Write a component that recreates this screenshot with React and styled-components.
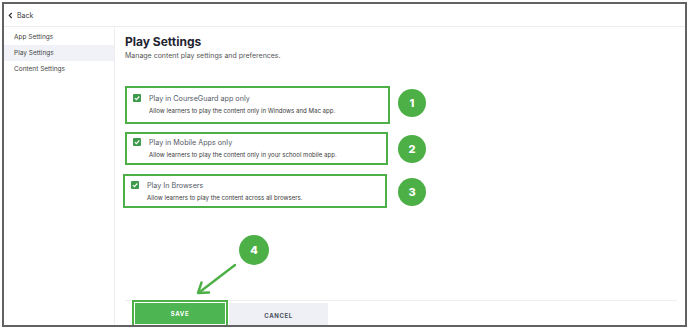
import React from "react";
import styled, { createGlobalStyle } from "styled-components";

const GREEN = "#4cb046";

const GlobalStyle = createGlobalStyle`
  html, body {
    margin: 0;
    padding: 0;
    background: #ffffff;
    font-family: Inter, "Noto Sans", "Liberation Sans", sans-serif;
  }
`;

const options = [
  {
    title: "Play in CourseGuard app only",
    desc: "Allow learners to play the content only in Windows and Mac app.",
    pad: "5px 0 6px",
    shift: 0,
    width: 265,
    gap: 0,
  },
  {
    title: "Play in Mobile Apps only",
    desc: "Allow learners to play the content only in your school mobile app.",
    pad: "3px 0 3px",
    shift: 0,
    width: 263,
    gap: 8,
  },
  {
    title: "Play In Browsers",
    desc: "Allow learners to play the content across all browsers.",
    pad: "4px 0 3px",
    shift: -2,
    width: 264,
    gap: 9,
  },
];

const markers = [
  { n: 1, x: 394, y: 85, size: 28 },
  { n: 2, x: 394, y: 131, size: 28 },
  { n: 3, x: 394, y: 174, size: 28 },
  { n: 4, x: 235, y: 231, size: 30 },
];

export default function App() {
  return (
    <>
      <GlobalStyle />
      <Frame>
        <Header>
          <BackLink>
            <Chevron viewBox="0 0 6 8">
              <path d="M4.5 1 L1.5 4 L4.5 7" />
            </Chevron>
            Back
          </BackLink>
        </Header>
        <Body>
          <Sidebar>
            <NavItem>App Settings</NavItem>
            <NavItem $active>Play Settings</NavItem>
            <NavItem>Content Settings</NavItem>
          </Sidebar>
          <Main>
            <Title>Play Settings</Title>
            <Subtitle>Manage content play settings and preferences.</Subtitle>
            <Options>
              {options.map((o) => (
                <Card
                  key={o.title}
                  $pad={o.pad}
                  $shift={o.shift}
                  $width={o.width}
                  $gap={o.gap}
                >
                  <CardRow>
                    <Check viewBox="0 0 8 8">
                      <rect x="0" y="0" width="8" height="8" rx="1" />
                      <path d="M1.8 4.1 L3.4 5.6 L6.3 2.5" />
                    </Check>
                    <CardTitle>{o.title}</CardTitle>
                  </CardRow>
                  <CardDesc>{o.desc}</CardDesc>
                </Card>
              ))}
            </Options>
            <Footer>
              <SaveOutline>
                <SaveButton>SAVE</SaveButton>
              </SaveOutline>
              <CancelButton>CANCEL</CancelButton>
            </Footer>
          </Main>
        </Body>

        {markers.map((m) => (
          <Marker key={m.n} style={{ left: m.x, top: m.y }} $size={m.size}>
            {m.n}
          </Marker>
        ))}
        <Arrow viewBox="0 0 60 40" width="60" height="40">
          <line x1="40" y1="6" x2="6" y2="32" />
          <path d="M3 34 L14 33.5 M3 34 L6.5 23.5" />
        </Arrow>
      </Frame>
    </>
  );
}

const Frame = styled.div`
  position: relative;
  box-sizing: border-box;
  margin: 2px 0 0 2px;
  width: 685px;
  height: 325px;
  border: 2px solid #626262;
  background: #ffffff;
  overflow: hidden;
  display: flex;
  flex-direction: column;
`;

const Header = styled.div`
  height: 22px;
  flex-shrink: 0;
  border-bottom: 1px solid #ececec;
  display: flex;
  align-items: center;
  padding-left: 4px;
`;

const BackLink = styled.div`
  display: flex;
  align-items: center;
  gap: 4px;
  font-size: 7px;
  color: #3c3c3c;
`;

const Chevron = styled.svg`
  width: 5px;
  height: 7px;
  fill: none;
  stroke: #333;
  stroke-width: 1.4;
`;

const Body = styled.div`
  flex: 1;
  display: flex;
  min-height: 0;
`;

const Sidebar = styled.aside`
  width: 110px;
  flex-shrink: 0;
  border-right: 1px solid #eeeeee;
  padding-top: 2px;
  display: flex;
  flex-direction: column;
`;

const NavItem = styled.div`
  height: 16px;
  display: flex;
  align-items: center;
  padding-left: 10px;
  font-size: 6.5px;
  color: #444;
  background: ${(p) => (p.$active ? "#f0f2f7" : "transparent")};
`;

const Main = styled.main`
  flex: 1;
  display: flex;
  flex-direction: column;
  padding: 0 8px 0 10px;
  min-width: 0;
`;

const Title = styled.h1`
  margin: 7px 0 0;
  font-size: 12px;
  line-height: 15px;
  font-weight: 700;
  color: #1f2430;
`;

const Subtitle = styled.p`
  margin: 2px 0 0;
  font-size: 7px;
  line-height: 10px;
  color: #555;
`;

const Options = styled.div`
  margin-top: 25px;
  display: flex;
  flex-direction: column;
`;

const Card = styled.div`
  box-sizing: border-box;
  width: ${(p) => p.$width}px;
  margin-left: ${(p) => p.$shift}px;
  margin-top: ${(p) => p.$gap}px;
  border: 2px solid ${GREEN};
  padding: ${(p) => p.$pad};
  padding-left: 6px;
  display: flex;
  flex-direction: column;
  gap: 3px;
`;

const CardRow = styled.div`
  display: flex;
  align-items: center;
  gap: 8px;
  height: 10px;
`;

const Check = styled.svg`
  width: 8px;
  height: 8px;
  flex-shrink: 0;
  rect {
    fill: #3e9a4c;
  }
  path {
    fill: none;
    stroke: #ffffff;
    stroke-width: 1.1;
  }
`;

const CardTitle = styled.span`
  font-size: 7.2px;
  color: #555a66;
`;

const CardDesc = styled.div`
  padding-left: 16px;
  font-size: 6.1px;
  line-height: 10px;
  color: #3a3a3a;
`;

const Footer = styled.div`
  margin-top: auto;
  height: 24px;
  border-top: 1px solid #eeeeee;
  display: flex;
  align-items: flex-start;
  padding-left: 7px;
`;

const SaveOutline = styled.div`
  border: 2px solid ${GREEN};
  padding: 1px;
  background: #ffffff;
  margin-top: -1px;
`;

const SaveButton = styled.button`
  display: block;
  width: 90px;
  height: 21px;
  border: none;
  background: #4db551;
  color: #ffffff;
  font-family: inherit;
  font-size: 6px;
  font-weight: 700;
  letter-spacing: 0.6px;
  padding: 0;
`;

const CancelButton = styled.button`
  width: 99px;
  height: 24px;
  margin-top: 2px;
  margin-left: 1px;
  border: none;
  background: #eef0f6;
  color: #4a4f5c;
  font-family: inherit;
  font-size: 6px;
  font-weight: 700;
  letter-spacing: 0.6px;
  padding: 0;
`;

const Marker = styled.div`
  position: absolute;
  width: ${(p) => p.$size}px;
  height: ${(p) => p.$size}px;
  border-radius: 50%;
  background: ${GREEN};
  color: #ffffff;
  font-size: 11px;
  font-weight: 800;
  display: flex;
  align-items: center;
  justify-content: center;
`;

const Arrow = styled.svg`
  position: absolute;
  left: 191px;
  top: 255px;
  overflow: visible;
  line,
  path {
    fill: none;
    stroke: ${GREEN};
    stroke-width: 2.4;
    stroke-linecap: round;
  }
`;
